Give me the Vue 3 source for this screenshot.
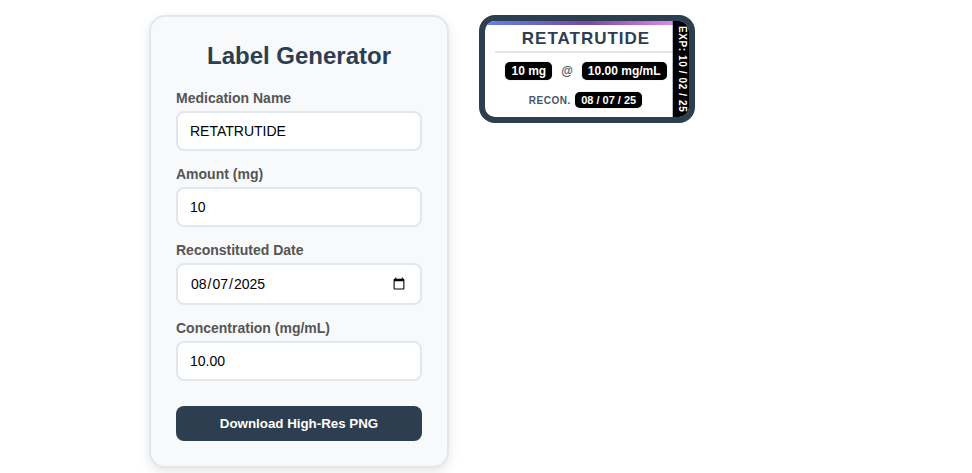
<template>
  <div class="container">
    <div class="controls">
      <h2>Label Generator</h2>

      <div class="form-group">
        <label for="medication">Medication Name</label>
        <input id="medication" v-model="form.name" type="text" />
      </div>

      <div class="form-group">
        <label for="amount">Amount (mg)</label>
        <input id="amount" v-model="form.amount" type="text" />
      </div>

      <div class="form-group">
        <label for="recon">Reconstituted Date</label>
        <input id="recon" v-model="form.date" type="date" />
      </div>

      <div class="form-group">
        <label for="concentration">Concentration (mg/mL)</label>
        <input id="concentration" v-model="form.concentration" type="text" />
      </div>

      <button class="download-btn" type="button">Download High-Res PNG</button>
    </div>

    <div class="label-card">
      <div class="label-content">
        <div class="med-name">{{ form.name }}</div>
        <div class="dose-row">
          <span class="pill">{{ form.amount }} mg</span>
          <span class="at">@</span>
          <span class="pill">{{ form.concentration }} mg/mL</span>
        </div>
        <div class="recon-row">
          <span class="recon-text">RECON.</span>
          <span class="pill date">{{ formatDate(form.date) }}</span>
        </div>
      </div>
      <div class="exp-strip">
        <span>EXP: {{ formatDate(expDate) }}</span>
      </div>
    </div>
  </div>
</template>

<script setup>
import { reactive, computed } from "vue";

const form = reactive({
  name: "RETATRUTIDE",
  amount: "10",
  date: "2025-08-07",
  concentration: "10.00",
});

// expires 8 weeks after reconstitution
const expDate = computed(() => {
  if (!form.date) return "";
  const d = new Date(form.date + "T00:00:00Z");
  d.setUTCDate(d.getUTCDate() + 56);
  return d.toISOString().slice(0, 10);
});

function formatDate(value) {
  if (!value) return "";
  const [y, m, d] = value.split("-");
  return `${m} / ${d} / ${y.slice(2)}`;
}
</script>

<style>
body {
  margin: 0;
  background: #fff;
}
</style>

<style scoped>
.container {
  display: flex;
  align-items: flex-start;
  gap: 30px;
  box-sizing: border-box;
  height: 100vh;
  padding: 15px 0 0 149px;
  overflow: hidden;
  font-family: "Liberation Sans", Arial, sans-serif;
}

.controls {
  box-sizing: border-box;
  width: 300px;
  padding: 25px;
  background: #f8f9fb;
  border: 2px solid #e1e8ed;
  border-radius: 16px;
  box-shadow: 0 4px 12px rgba(0, 0, 0, 0.1);
}

h2 {
  margin: 0 0 20px;
  font-size: 24px;
  line-height: 28px;
  color: #2c3e50;
  text-align: center;
}

.form-group {
  margin-bottom: 15px;
}

.form-group label {
  display: block;
  margin-bottom: 5px;
  font-size: 14px;
  line-height: 16px;
  font-weight: bold;
  color: #555;
}

.form-group input {
  display: block;
  box-sizing: border-box;
  width: 100%;
  height: 40px;
  padding: 10px 12px;
  border: 2px solid #e1e8ed;
  border-radius: 8px;
  background: #fff;
  color: #000;
  font-family: inherit;
  font-size: 14px;
}

.form-group input[type="date"] {
  height: 42px;
}

.download-btn {
  display: block;
  width: 100%;
  height: 35px;
  margin-top: 25px;
  border: none;
  border-radius: 8px;
  background: #2c3e50;
  color: #fff;
  font-family: inherit;
  font-size: 13.333px;
  font-weight: bold;
  cursor: pointer;
}

.label-card {
  position: relative;
  box-sizing: border-box;
  width: 216px;
  height: 108px;
  border: 6px solid #2c3e50;
  border-radius: 16px;
  background: #fff;
  overflow: hidden;
}

.label-card::before {
  content: "";
  position: absolute;
  top: 0;
  left: 0;
  right: 0;
  height: 4px;
  background: linear-gradient(90deg, #667eea 0%, #764ba2 50%, #f093fb 100%);
}

.label-content {
  padding: 4px 12px 0 10px;
}

.med-name {
  height: 26px;
  border-bottom: 2px solid #e1e8ed;
  font-size: 17px;
  line-height: 27px;
  font-weight: bold;
  letter-spacing: 1px;
  color: #2c3e50;
  text-align: center;
}

.dose-row {
  display: flex;
  justify-content: center;
  align-items: center;
  gap: 9px;
  height: 18px;
  margin-top: 9px;
}

.pill {
  padding: 0 6px;
  border-radius: 5px;
  background: #000;
  box-shadow: 0 0 1px rgba(0, 0, 0, 0.4);
  color: #fff;
  font-size: 12px;
  line-height: 18px;
  font-weight: bold;
  white-space: nowrap;
}

.at {
  font-size: 12px;
  font-weight: bold;
  color: #4a5568;
}

.recon-row {
  display: flex;
  justify-content: center;
  align-items: center;
  gap: 4.5px;
  margin-top: 12px;
  padding-right: 1px;
}

.recon-text {
  font-size: 10px;
  font-weight: bold;
  letter-spacing: 0.5px;
  color: #4a5568;
}

.pill.date {
  font-size: 11px;
  line-height: 16px;
}

/* lies over the gradient bar and the title underline */
.exp-strip {
  position: absolute;
  top: 0;
  right: 0;
  bottom: 0;
  display: flex;
  align-items: center;
  justify-content: center;
  box-sizing: border-box;
  width: 16px;
  padding-left: 2px;
  background: #000;
  box-shadow: 0 0 0 1px rgba(44, 62, 80, 0.35);
  color: #fff;
  font-size: 10px;
  font-weight: bold;
  letter-spacing: 0.6px;
  writing-mode: vertical-rl;
  white-space: nowrap;
}
</style>
